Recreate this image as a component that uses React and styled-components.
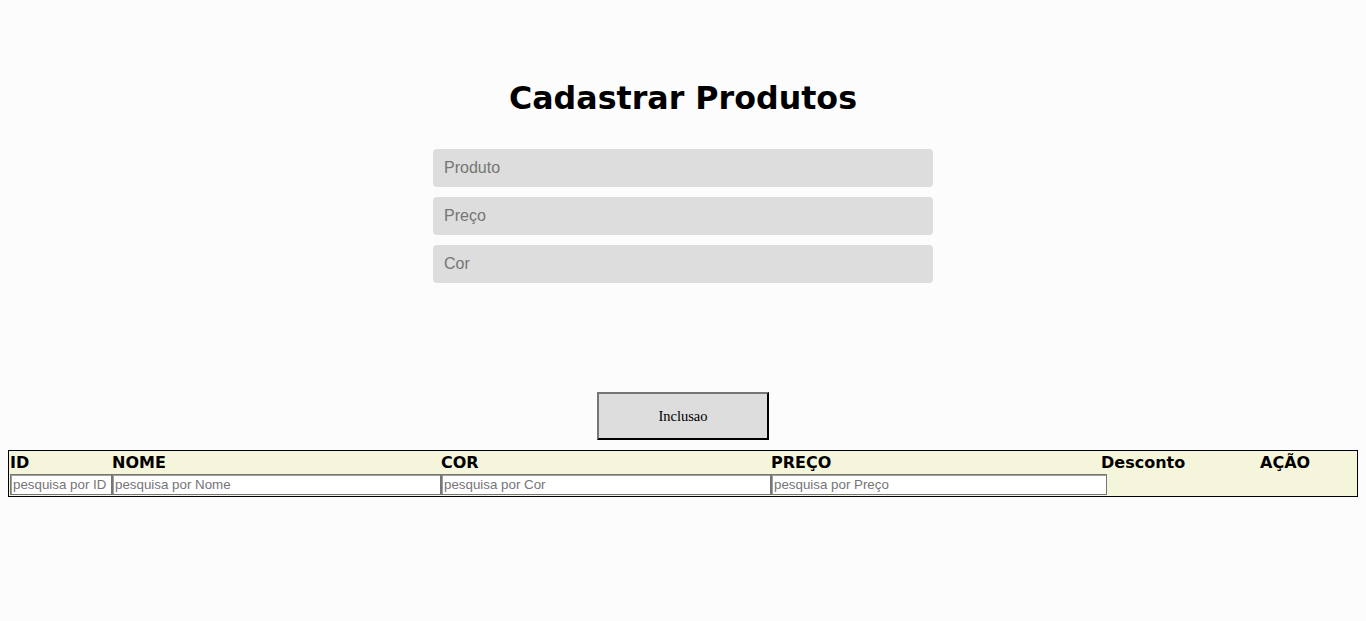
import styled, { createGlobalStyle } from 'styled-components';

const GlobalStyle = createGlobalStyle`
  body {
    margin: 8px;
    background-color: #fcfcfc;
    font-family: 'DejaVu Sans', Verdana, sans-serif;
  }
`;

const columns = [
  { key: 'id', label: 'ID', width: 102, search: 'pesquisa por ID', inputWidth: 102 },
  { key: 'nome', label: 'NOME', width: 329, search: 'pesquisa por Nome', inputWidth: 329 },
  { key: 'cor', label: 'COR', width: 330, search: 'pesquisa por Cor', inputWidth: 330 },
  { key: 'preco', label: 'PREÇO', width: 330, search: 'pesquisa por Preço', inputWidth: 336 },
  { key: 'desconto', label: 'Desconto', width: 159 },
  { key: 'acao', label: 'AÇÃO' },
];

const App = () => {
  return (
    <>
      <GlobalStyle />
      <Page>
        <Title>Cadastrar Produtos</Title>
        <Form onSubmit={(e) => e.preventDefault()}>
          <Field type="text" placeholder="Produto" />
          <Field type="text" placeholder="Preço" />
          <Field type="text" placeholder="Cor" />
          <Button type="submit">Inclusao</Button>
        </Form>
        <Table>
          <colgroup>
            {columns.map((c) => (
              <col key={c.key} style={c.width ? { width: c.width } : undefined} />
            ))}
          </colgroup>
          <thead>
            <tr>
              {columns.map((c) => (
                <Th key={c.key}>{c.label}</Th>
              ))}
            </tr>
          </thead>
          <tbody>
            <tr>
              {columns.map((c) => (
                <Td key={c.key}>
                  {c.search ? <Search $width={c.inputWidth} type="text" placeholder={c.search} /> : null}
                </Td>
              ))}
            </tr>
          </tbody>
        </Table>
      </Page>
    </>
  );
};

const Page = styled.div`
  display: flex;
  flex-direction: column;
  align-items: center;
  padding-top: 72px;
`;

const Title = styled.h1`
  margin: 0 0 33px;
  font-family: 'DejaVu Sans', Verdana, sans-serif;
  font-size: 31.7px;
  font-weight: 700;
  color: #000;
`;

const Form = styled.form`
  display: flex;
  flex-direction: column;
  align-items: center;
  gap: 10px;
`;

const Field = styled.input`
  box-sizing: border-box;
  width: 500px;
  height: 38px;
  padding: 0 11px;
  border: none;
  border-radius: 4px;
  background-color: #dddddd;
  font-family: 'Liberation Sans', Arial, sans-serif;
  font-size: 16px;
  color: #333;
  outline: none;
  &::placeholder {
    color: #757575;
  }
`;

const Button = styled.button`
  box-sizing: border-box;
  width: 172px;
  height: 48px;
  margin-top: 99px;
  margin-bottom: 10px;
  background-color: #dddddd;
  border: 2px outset #767676;
  border-color: #767676 #222 #222 #767676;
  font-family: 'Liberation Serif', 'Times New Roman', serif;
  font-size: 14.5px;
  color: #000;
  cursor: pointer;
`;

const Table = styled.table`
  box-sizing: border-box;
  width: 100%;
  table-layout: fixed;
  border: 1px solid #000;
  border-spacing: 0;
  padding: 0 1px 0 1px;
  background-color: #f5f5dc;
`;

const Th = styled.th`
  height: 23px;
  padding: 0;
  text-align: left;
  vertical-align: middle;
  font-family: 'DejaVu Sans', Verdana, sans-serif;
  font-size: 16px;
  font-weight: 700;
  color: #000;
  white-space: nowrap;
`;

const Td = styled.td`
  padding: 0;
  height: 22px;
  vertical-align: top;
  overflow: visible;
`;

const Search = styled.input`
  box-sizing: border-box;
  display: block;
  width: ${(p) => p.$width}px;
  height: 21px;
  margin: 0;
  padding: 1px 2px;
  border: 1px solid #767676;
  box-shadow: inset 1px 1px 0 #a0a0a0;
  background-color: #fff;
  font-family: 'Liberation Sans', Arial, sans-serif;
  font-size: 13.33px;
  &::placeholder {
    color: #757575;
  }
`;

export default App;
